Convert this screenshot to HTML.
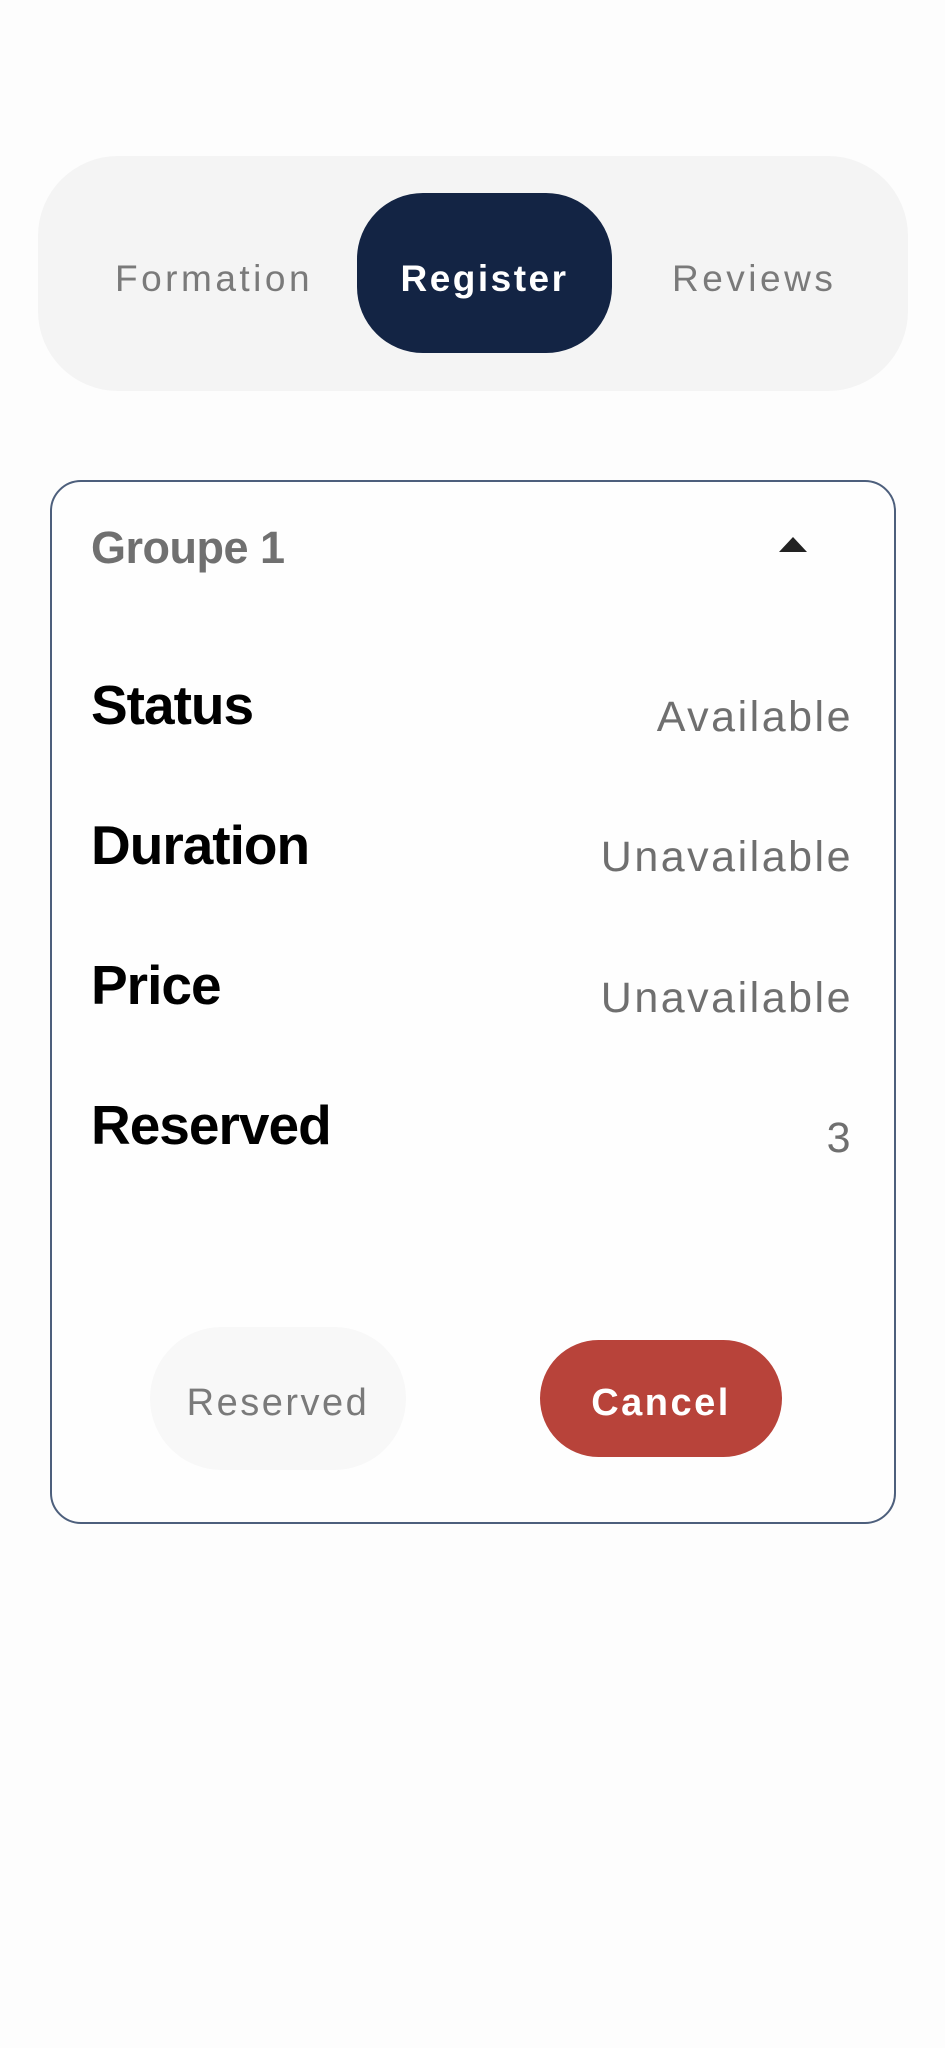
<!DOCTYPE html>
<html><head><style>
html,body{margin:0;padding:0;background:#fdfdfd;width:945px;height:2048px;overflow:hidden;font-family:"Liberation Sans",Arial,sans-serif}
.a{position:absolute;white-space:nowrap;line-height:1}
.lab{left:91px;font-weight:bold;font-size:55px;color:#000;letter-spacing:-1px}
.val{right:92px;font-size:43px;color:#6f6f6f;letter-spacing:2.5px}
</style></head><body>
<div class="a" style="left:38px;top:156px;width:870px;height:235px;border-radius:80px;background:#f4f4f4"></div>
<div class="a" style="left:357px;top:193px;width:255px;height:160px;border-radius:66px;background:#132444"></div>
<div class="a" style="left:115px;top:260px;font-size:37px;color:#7a7a7a;letter-spacing:3.5px">Formation</div>
<div class="a" style="left:357px;width:255px;text-align:center;top:260px;font-size:37px;font-weight:bold;color:#fff;letter-spacing:2.5px">Register</div>
<div class="a" style="left:672px;top:260px;font-size:37px;color:#7a7a7a;letter-spacing:3.5px">Reviews</div>

<div class="a" style="left:50px;top:480px;width:842px;height:1040px;border:2px solid #4d5f7c;border-radius:31px;background:#fefefe"></div>
<div class="a" style="left:91px;top:525px;font-size:45px;font-weight:bold;color:#707070;letter-spacing:-0.5px">Groupe 1</div>
<svg class="a" style="left:779px;top:535px" width="28" height="18"><polygon points="0,17 14,2 28,17" fill="#222"/></svg>

<div class="a lab" style="top:678px">Status</div>
<div class="a val" style="top:696px">Available</div>
<div class="a lab" style="top:818px">Duration</div>
<div class="a val" style="top:836px">Unavailable</div>
<div class="a lab" style="top:958px">Price</div>
<div class="a val" style="top:977px">Unavailable</div>
<div class="a lab" style="top:1098px">Reserved</div>
<div class="a val" style="top:1117px">3</div>

<div class="a" style="left:150px;top:1327px;width:256px;height:143px;border-radius:72px;background:#f8f8f8"></div>
<div class="a" style="left:150px;width:256px;text-align:center;top:1384px;font-size:38px;color:#7a7a7a;letter-spacing:2.5px">Reserved</div>
<div class="a" style="left:540px;top:1340px;width:242px;height:117px;border-radius:59px;background:#b8433a"></div>
<div class="a" style="left:540px;width:242px;text-align:center;top:1384px;font-size:38px;font-weight:bold;color:#fff;letter-spacing:2.5px">Cancel</div>
</body></html>
